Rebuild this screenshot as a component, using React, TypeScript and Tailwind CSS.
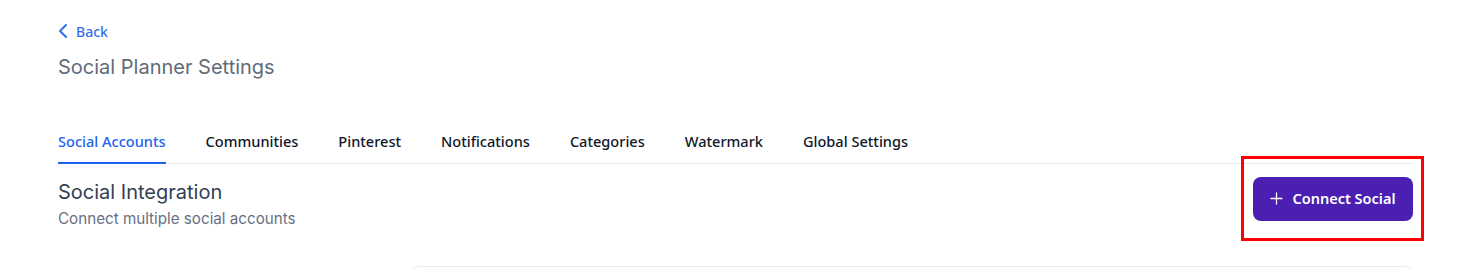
const tabs = [
  "Social Accounts",
  "Communities",
  "Pinterest",
  "Notifications",
  "Categories",
  "Watermark",
  "Global Settings",
];

export default function App() {
  return (
    <div className="h-[270px] overflow-hidden bg-white pl-[58px] pr-[70px] font-['Inter',sans-serif]">
      <div className="pt-[21px]">
        <button className="flex h-[20px] items-center gap-[8px] text-[14px] font-medium text-[#2f6ff0]">
          <svg width="10" height="16" viewBox="0 0 10 16" fill="none">
            <path d="M8 2L2 8l6 6" stroke="currentColor" strokeWidth="2" strokeLinecap="round" strokeLinejoin="round" />
          </svg>
          <span className="font-['Noto_Sans',sans-serif]">Back</span>
        </button>
        <h1 className="mt-[12px] text-[20px] leading-[28px] text-[#5f6b7a]">Social Planner Settings</h1>
      </div>

      <div className="mt-[47px] flex gap-[40px] border-b border-[#eaecf0] font-['Noto_Sans',sans-serif] text-[14.55px] font-medium">
        {tabs.map((t, i) => (
          <div
            key={t}
            className={
              i === 0
                ? "-mb-px border-b-2 border-[#1d63ed] pb-[9px] pt-[3px] text-[#1d63ed]"
                : "pb-[9px] pt-[3px] text-[#101828]"
            }
          >
            {t}
          </div>
        ))}
      </div>

      <div className="flex items-start justify-between pt-[13px]">
        <div className="pt-[1px]">
          <h2 className="text-[20px] leading-[28px] text-[#344054]">Social Integration</h2>
          <p className="mt-[3px] text-[15.2px] leading-[20px] text-[#667085]">Connect multiple social accounts</p>
        </div>
        <div className="relative">
          <button className="flex h-[44px] w-[160px] items-center justify-center gap-[9px] rounded-lg bg-[#4a1fb2] font-['Noto_Sans',sans-serif] text-[14.5px] font-semibold text-white">
            <svg width="13" height="13" viewBox="0 0 13 13" fill="none">
              <path d="M6.5 1v11M1 6.5h11" stroke="currentColor" strokeWidth="1.3" strokeLinecap="round" />
            </svg>
            Connect Social
          </button>
          <div className="pointer-events-none absolute -left-[12px] -top-[21px] h-[85px] w-[183px] border-[3px] border-[#ff0000]" />
        </div>
      </div>

      <div className="ml-[353px] mt-[37px] h-[8px] rounded-t-xl border border-b-0 border-[#eaecf0]" />
    </div>
  );
}
